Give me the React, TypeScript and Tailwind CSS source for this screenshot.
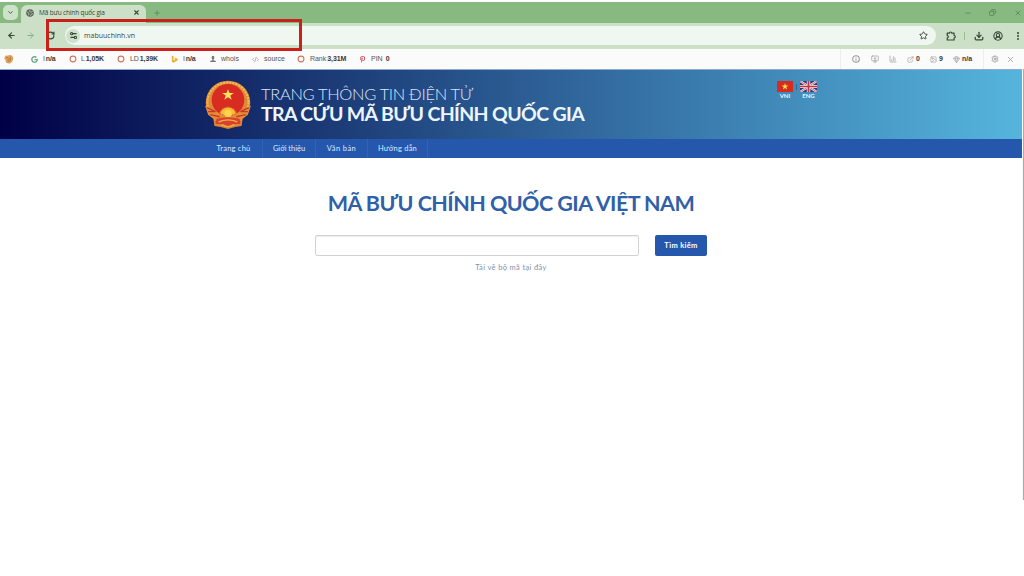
import React from "react";
import {
  ArrowLeft, ArrowRight, RotateCw, ChevronDown, X, Plus, Star, Download,
  CircleUserRound, EllipsisVertical, Minus, Copy, Info, MonitorDown, ChartColumn,
  ExternalLink, ImageIcon, Gem, Settings, CodeXml, Settings2,
} from "lucide-react";
import { FaGoogle, FaPinterestP } from "react-icons/fa";

function Ring() {
  return (
    <svg viewBox="0 0 8 8" className="block size-[8px]">
      <circle cx="4" cy="4" r="2.9" fill="none" stroke="#cf7660" strokeWidth="1.1" />
    </svg>
  );
}

function Bing() {
  return (
    <svg viewBox="0 0 8 8" className="block size-[8px]">
      <path d="M.8.6v6.200l1.700.9L6.700 5.200V3.800L3.200 2.600l1 2-1.700 1V1.200z" fill="#e6b22f" />
    </svg>
  );
}

function Squirrel() {
  return (
    <svg viewBox="0 0 10 10" className="block size-[10px]">
      <path d="M.8 3.300C.8 1.500 3 1.200 3.800 2 4.500.3 9.200.5 9.200 4 9.200 7.500 7 9.500 5 9.500 2.500 9.500 1 8 1.700 6 .5 5.500 0 4 .8 3.300z" fill="#dba75f" />
      <path d="M2 3.600h2M4.500 4.500h1M3.500 7h2.500M6.300 2.600v4M3.600 5.600h1" stroke="#ac6a32" strokeWidth=".8" />
    </svg>
  );
}

function Person() {
  return (
    <svg viewBox="0 0 8 8" className="block size-[8px]">
      <path d="M2.600 2.400a1.400 1.600 0 0 1 2.800 0c0 1-.5 1.500-.8 1.900v.9l2.200.7v1H1.200v-1l2.200-.7v-.9c-.3-.4-.8-.9-.8-1.900z" fill="#777" />
    </svg>
  );
}

function GlobeIcon() {
  return (
    <svg viewBox="0 0 8 8" className="block size-[8px] shrink-0">
      <circle cx="4" cy="4" r="3.800" fill="#566056" />
      <path d="M1 2.800 2.800 4l.2 1.600-1.200.6M4.200.8l-.7 1.600 1.500.8 1.800-.9M4.600 6.800l.6-1.600 1.800-.4" fill="none" stroke="#c5d7c1" strokeWidth=".8" />
    </svg>
  );
}

function PuzzleIcon() {
  return (
    <svg viewBox="0 0 10 10" className="ml-[10px] block size-[10px] shrink-0">
      <path d="M1.200 2.200h2.200a1.200 1.200 0 0 1 2.400 0h2.300v2.300a1.200 1.200 0 0 1 0 2.400V9H1.200V6.800a1.100 1.100 0 0 0 0-2.300z" fill="none" stroke="currentColor" strokeWidth="1.200" strokeLinejoin="round" />
    </svg>
  );
}

interface MetricProps {
  width: string;
  icon: React.ReactNode;
  label?: string;
  value?: string;
  tracking?: string;
}

function Metric({ width, icon, label, value, tracking = "" }: MetricProps) {
  return (
    <div className={`flex shrink-0 items-center whitespace-nowrap ${width}`}>
      <span className="w-[12px] shrink-0">{icon}</span>
      <span className={`flex gap-[1px] ${tracking}`}>
        {label && <span>{label}</span>}
        {value && <b className="font-bold text-[#383838]">{value}</b>}
      </span>
    </div>
  );
}

function Emblem() {
  return (
    <svg viewBox="1 0 44 48" preserveAspectRatio="none" className="block h-[49px] w-[46px]">
      <path d="M10 40h26v5l-6 1-7 2-7-2-6-1z" fill="#d9822e" />
      <circle cx="23" cy="22" r="21.300" fill="#dd8a35" />
      <circle cx="23" cy="22" r="19.600" fill="none" stroke="#f1ba58" strokeWidth="2" strokeDasharray="2 1" />
      <circle cx="23" cy="19.500" r="15.600" fill="#d82c23" />
      <path d="m23 9 1.400 3.800h4.200l-3.400 2.500 1.300 4-3.500-2.500-3.500 2.500 1.300-4-3.400-2.500h4.200z" fill="#ffe25c" />
      <path d="M1 25 8 29l7 4 8 3 8-3 7-4 7-4-3 9-5 4-1 6-7 1-6-2-6 2-7-1-1-6-5-4z" fill="#e58c37" />
      <path d="m3 27 8 4-7 0m39-4-8 4h7M6 34l9 2m25-2-9 2M11 41l8-2m16 2-8-2" fill="none" stroke="#c5392a" strokeWidth="1.300" />
      <path d="M15 33a8.200 8.200 0 0 1 16 0l-8 3z" fill="#f6be35" stroke="#db652b" strokeWidth="1.200" strokeDasharray="1.500 1" />
      <circle cx="23" cy="33" r="3.500" fill="#fbd54b" />
      <path d="M12 38q11-3 22 0l1 5-7 .4-5 1.600-5-1.600-7-.4z" fill="#d8412b" />
      <path d="M14 41q9-4 18 0M17 44l6 2 6-2" fill="none" stroke="#efb052" strokeWidth="1.200" />
    </svg>
  );
}

function FlagVN() {
  return (
    <svg viewBox="0 0 16 11" className="block h-[11px] w-[16px]">
      <path fill="#d52b20" d="M0 0h16v11H0z" />
      <path fill="#ffe34a" d="m8 2 .8 2.500h2.600L9.300 6l.8 2.500L8 7 5.900 8.500 6.700 6 4.600 4.500h2.600z" />
    </svg>
  );
}

function FlagUK() {
  return (
    <svg viewBox="0 0 16 11" preserveAspectRatio="none" className="block h-[11px] w-[17px]">
      <path fill="#2b3c7c" d="M0 0h16v11H0z" />
      <path d="m0 0 16 11M16 0 0 11" stroke="#eee" strokeWidth="2.200" />
      <path d="m0 0 16 11M16 0 0 11" stroke="#c73b46" strokeWidth=".7" />
      <path d="M8 0v11M0 5.500h16" stroke="#f1eef1" strokeWidth="3.200" />
      <path d="M8 0v11M0 5.500h16" stroke="#c92f3f" strokeWidth="1.700" />
    </svg>
  );
}

function TabStrip() {
  return (
    <div className="flex h-[21px] items-center bg-[#87b981] text-[#36513a]">
      <button className="ml-[3px] flex size-[15px] items-center justify-center rounded-[5px] bg-[#cde2c8]">
        <ChevronDown size={7} strokeWidth={3} />
      </button>
      <div className="ml-[3px] mt-[3px] flex h-[18px] w-[125px] items-center rounded-t-[6px] bg-[#cbe0c6] pb-[3px] pl-[5px]">
        <GlobeIcon />
        <span className="ml-[5px] w-[94px] whitespace-nowrap text-[6.500px] tracking-[-0.150px] text-[#344634]">Mã bưu chính quốc gia</span>
        <X size={7} strokeWidth={4} className="shrink-0" />
      </div>
      <Plus size={8} strokeWidth={2} className="ml-[7px] text-[#527f51]" />
      <div className="ml-auto flex items-center text-[#527f51]">
        <Minus size={8} strokeWidth={2} className="mr-[17px]" />
        <Copy size={7} strokeWidth={2.500} className="mr-[18px] -scale-x-100" />
        <X size={8} strokeWidth={2} className="mr-[2px]" />
      </div>
    </div>
  );
}

function Toolbar() {
  return (
    <div className="relative flex h-[26px] items-center bg-[#cbe0c6] pb-[1px] text-[#344a37]">
      <ArrowLeft size={9} strokeWidth={3} className="ml-[7px] shrink-0" />
      <ArrowRight size={9} strokeWidth={2.500} className="ml-[10px] shrink-0 text-[#86a986]" />
      <RotateCw size={9} strokeWidth={3.200} className="ml-[11px] shrink-0" />
      <div className="ml-[10px] flex h-[19px] w-[871px] shrink-0 items-center rounded-full bg-[#f0f7f0] pl-[1px]">
        <span className="flex size-[14px] items-center justify-center rounded-full bg-[#cfe0cc]">
          <Settings2 size={9} strokeWidth={3} className="rotate-180" />
        </span>
        <span className="ml-[4px] pt-[2px] text-[7px] tracking-[0.020px] text-[#3c483e]">mabuuchinh.vn</span>
        <Star size={9} strokeWidth={2.500} className="ml-auto mr-[8px]" />
      </div>
      <PuzzleIcon />
      <span className="ml-[8px] h-[8px] w-px shrink-0 bg-[#9bbd98]" />
      <Download size={10} strokeWidth={3} className="ml-[9px] shrink-0" />
      <CircleUserRound size={10} strokeWidth={2.600} className="ml-[9px] shrink-0" />
      <EllipsisVertical size={10} strokeWidth={3} className="ml-[10px] shrink-0" />
      <div className="absolute left-[46px] top-[-4px] h-[32px] w-[256px] border-[3px] border-[#c8211b]" />
    </div>
  );
}

function SeoBar() {
  return (
    <div className="flex h-[20px] items-center bg-[#fbfbfb] pl-[4px] font-['Liberation_Sans',sans-serif] text-[7px] text-[#555]">
      <div className="w-[27px] shrink-0"><Squirrel /></div>
      <Metric width="w-[38px]" icon={<FaGoogle size={7} color="#60a276" />} label="I" value="n/a" tracking="tracking-[-0.150px]" />
      <Metric width="w-[48px]" icon={<Ring />} label="L" value="1,05K" tracking="tracking-[-0.100px]" />
      <Metric width="w-[54px]" icon={<Ring />} label="LD" value="1,39K" tracking="ml-[1px] tracking-[-0.100px]" />
      <Metric width="w-[38px]" icon={<Bing />} label="I" value="n/a" tracking="tracking-[-0.150px]" />
      <Metric width="w-[43px]" icon={<Person />} label="whois" />
      <Metric width="w-[45px]" icon={<CodeXml size={7} color="#888" />} label="source" />
      <Metric width="w-[62px]" icon={<Ring />} label="Rank" value="3,31M" tracking="ml-[1px] tracking-[-0.050px]" />
      <Metric width="w-[40px]" icon={<FaPinterestP size={7} color="#c84752" />} label="PIN&nbsp;" value="0" />
      <div className="ml-auto flex h-full items-center border-l border-[#eee] pl-[11px] text-[#999]">
        <div className="w-[19px]"><Info size={8} strokeWidth={3.200} /></div>
        <div className="w-[18px]"><MonitorDown size={8} /></div>
        <div className="w-[18px]"><ChartColumn size={8} /></div>
        <Metric width="w-[23px]" icon={<ExternalLink size={7} />} value="0" tracking="-ml-[3px]" />
        <Metric width="w-[23px]" icon={<ImageIcon size={7} />} value="9" tracking="-ml-[3px]" />
        <Metric width="w-[30px]" icon={<Gem size={7} />} value="n/a" tracking="-ml-[3px]" />
        <div className="flex h-full items-center border-l border-[#eee] pl-[7px]">
          <Settings size={8} strokeWidth={2.500} className="mr-[7px]" />
          <X size={9} className="mr-[9px]" />
        </div>
      </div>
    </div>
  );
}

function Header() {
  return (
    <header className="flex h-[70px] border-t border-[#8eabcc] bg-linear-to-r/srgb from-[#000046] to-[#55b5dd] pl-[205px] text-[#edf6ff]">
      <div className="mt-[10px] w-[56px] shrink-0"><Emblem /></div>
      <div className="w-[515px] shrink-0 whitespace-nowrap pt-[14px]">
        <div className="h-[20px] text-[16.500px] font-light leading-[20px] tracking-[-0.330px] text-[#d7e6fa]">TRANG THÔNG TIN ĐIỆN TỬ</div>
        <h2 className="text-[19.500px] font-bold leading-[20px] tracking-[-0.640px]">TRA CỨU MÃ BƯU CHÍNH QUỐC GIA</h2>
      </div>
      <div className="flex pl-[1px] pt-[11px] text-[6px] font-bold leading-[7px]">
        <div className="flex flex-col items-center"><FlagVN /><span>VNI</span></div>
        <span className="mx-[3px] mt-[3px] h-[6px] w-px bg-[#316d9a]" />
        <div className="flex flex-col items-center"><FlagUK /><span>ENG</span></div>
      </div>
    </header>
  );
}

function Nav() {
  return (
    <nav className="flex h-[19px] items-center bg-[#2558ad] pl-[205px] text-[7.500px] tracking-[0.220px] text-[#dce9ff]">
      <a className="flex h-full w-[58px] items-center justify-center border-r border-[#2f63b5] pt-[1px]">Trang chủ</a>
      <a className="flex h-full w-[53px] items-center justify-center border-r border-[#2f63b5] pt-[1px] tracking-[-0.030px]">Giới thiệu</a>
      <a className="flex h-full w-[52px] items-center justify-center border-r border-[#2f63b5] pt-[1px] tracking-[0.400px]">Văn bản</a>
      <a className="flex h-full w-[60px] items-center justify-center border-r border-[#2f63b5] pt-[1px]">Hướng dẫn</a>
    </nav>
  );
}

function Search() {
  return (
    <main className="flex flex-col items-center pt-[29px]">
      <h1 className="flex h-[32px] items-center whitespace-nowrap text-[21.500px] font-bold tracking-[-0.550px] text-[#2f60a8]">MÃ BƯU CHÍNH QUỐC GIA VIỆT NAM</h1>
      <div className="mt-[16px] flex w-[392px] justify-between">
        <input aria-label="Mã bưu chính" className="block h-[21px] w-[324px] rounded-[2px] border border-[#d2d2d2] bg-white shadow-[inset_0_1px_1px_#eee]" />
        <button className="h-[21px] w-[52px] rounded-[2px] bg-[#2558ad] pt-[1px] text-[7.500px] font-bold tracking-[0.300px] text-white">Tìm kiếm</button>
      </div>
      <a className="mt-[6px] text-[7.500px] leading-[12px] tracking-[0.360px] text-[#8192ad]">Tải về bộ mã tại đây</a>
    </main>
  );
}

export default function App() {
  return (
    <div className="flex h-[576px] w-[1024px] flex-col overflow-hidden bg-white pt-[2px] font-['Open_Sans','Noto_Sans',sans-serif]">
      <TabStrip />
      <Toolbar />
      <SeoBar />
      <div className="flex h-[431px]">
        <div className="w-[1022px] font-['Lato','Inter',sans-serif]">
          <Header />
          <Nav />
          <Search />
        </div>
        <div className="w-[2px] bg-[#fafafa] pl-[1px]"><div className="h-full bg-[#aaa]" /></div>
      </div>
    </div>
  );
}
